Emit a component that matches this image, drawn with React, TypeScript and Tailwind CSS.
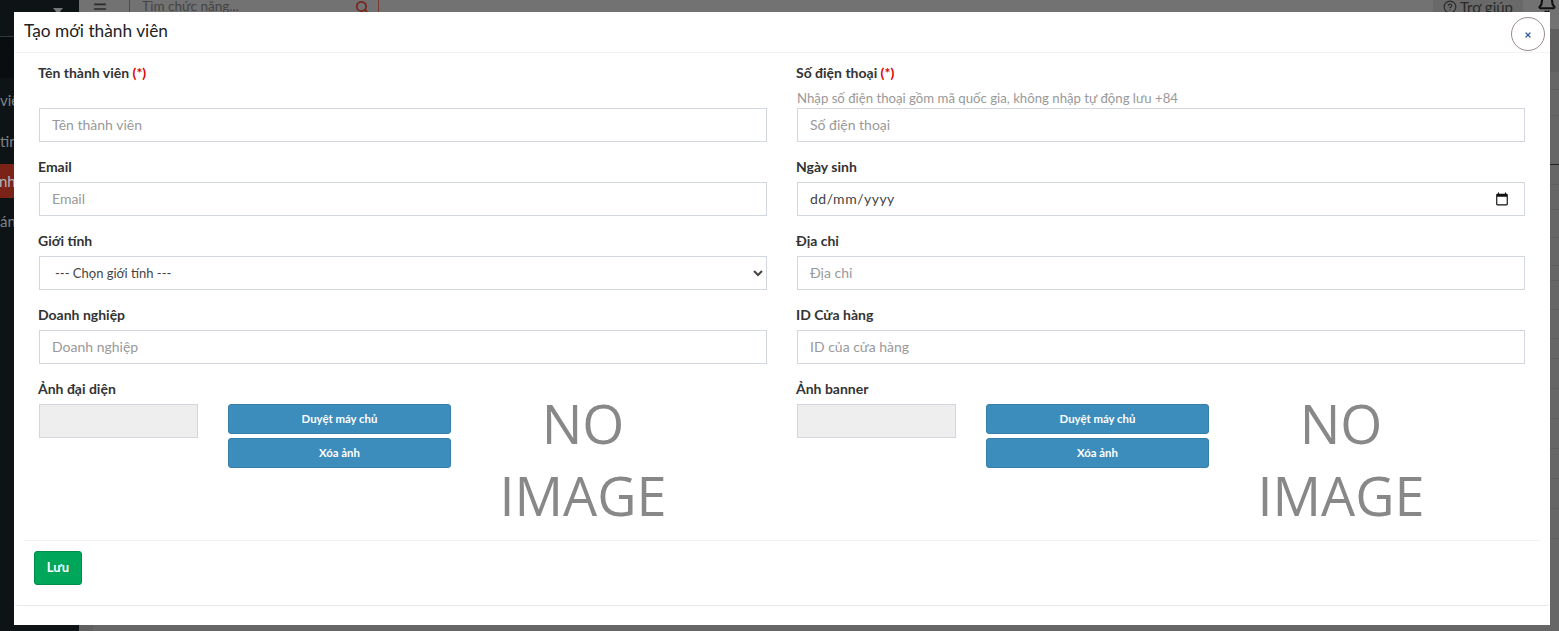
import React from "react";
import { Search, CircleHelp, Bell, X, Menu } from "lucide-react";

const F = "font-['Lato','Noto_Sans',sans-serif]";
const inputCls =
  "block w-full h-[34px] border border-[#d2d6de] bg-white px-3 pb-[2px] text-[14px] text-[#555] placeholder:text-[#999] outline-none rounded-none";

function Label({ text, req, hint }: { text: string; req?: boolean; hint?: string }) {
  return (
    <div className={`text-[14px] leading-[18px] font-bold text-[#333] -ml-px ${hint !== undefined ? "mb-[1px]" : "mb-[6px]"}`}>
      {text}
      {req && <span className="text-[#dd0000]"> (*)</span>}
      {hint !== undefined && (
        <div className="mt-[7px] ml-px h-[18px] text-[13.2px] font-normal text-[#999]">{hint}</div>
      )}
    </div>
  );
}

function Field({ label, placeholder, req, hint }: { label: string; placeholder: string; req?: boolean; hint?: string }) {
  return (
    <div className="mb-[16px]">
      <Label text={label} req={req} hint={hint} />
      <input className={inputCls} placeholder={placeholder} readOnly />
    </div>
  );
}

function ImageField({ label }: { label: string }) {
  return (
    <div>
      <Label text={label} />
      <div className="flex">
        <div className="w-[159px] h-[34px] border border-[#d2d6de] bg-[#eeeeee] shrink-0" />
        <div className="w-[223px] ml-[30px] flex flex-col gap-1 shrink-0">
          <button className="h-[30px] rounded-[3px] border border-[#367fa9] bg-[#3c8dbc] text-white text-[11.4px] font-bold">Duyệt máy chủ</button>
          <button className="h-[30px] rounded-[3px] border border-[#367fa9] bg-[#3c8dbc] text-white text-[11.4px] font-bold">Xóa ảnh</button>
        </div>
        <div className="w-[264px] -mt-[17px] text-center text-[#888] text-[54px] leading-[72px] font-['Open_Sans',sans-serif]">
          NO<br />IMAGE
        </div>
      </div>
    </div>
  );
}

export default function App() {
  return (
    <div className={`relative h-[631px] w-[1559px] overflow-hidden flex bg-[#666] ${F}`}>
      <aside className="w-[79px] shrink-0 bg-[#0e1316] text-[#7d8285] text-[15px] overflow-hidden">
        <div className="h-[37px] border-b border-[#33383a] flex justify-end pr-[16px] pt-[8px]">
          <div className="w-0 h-0 border-l-[5px] border-r-[5px] border-t-[6px] border-l-transparent border-r-transparent border-t-[#777]" />
        </div>
        <div className="h-[41px] bg-[#0a0d0f]" />
        <div className="flex flex-col gap-[6px] mt-[6px]">
          <div className="h-[34px] pb-[2px] flex items-center">viên</div>
          <div className="h-[34px] flex items-center">tin</div>
          <div className="h-[34px] flex items-center bg-[#7c2318] text-[#b5b5b5] -ml-[1px]">nh</div>
          <div className="h-[34px] flex items-center">ánh</div>
        </div>
      </aside>
      <main className="flex-1 flex flex-col bg-[#666]">
        <div className="h-[30px] shrink-0 bg-[#727272] border-b border-[#5e5e5e] flex items-start text-[#2a2a2a]">
          <Menu className="ml-[13px] mt-[1px] w-4 h-4" strokeWidth={2.5} />
          <div className="ml-[21px] w-[250px] h-[20px] -mt-[3px] pb-[1px] border-x border-[#7c3a30] flex items-center justify-between pl-3 pr-[9px] text-[13.5px] text-[#444]">
            Tìm chức năng...
            <Search className="w-3.5 h-3.5 text-[#7c2318]" strokeWidth={3} />
          </div>
          <div className="ml-auto mr-[2px] flex">
            <div className="h-[14px] px-[10px] bg-[#696969] flex items-center gap-[3px] text-[15px] leading-none whitespace-nowrap">
              <CircleHelp className="w-[14px] h-[14px]" /> Trợ giúp
            </div>
            <Bell className="ml-[14px] w-[20px] h-[20px] -mt-[6px] text-[#111]" strokeWidth={2.5} />
          </div>
        </div>
        <div className="flex-1 border-l-[14px] border-[#606060] flex flex-col">
          <div className="h-[42px] bg-[#5f5f5f]" />
          <div className="h-[18px] border-b border-[#5e5e5e]" />
          <div className="h-[26px] border-b border-[#5e5e5e]" />
          <div className="h-[49px] border-b border-[#222]" />
          <div className="h-[20px] border-b border-[#5e5e5e]" />
          <div className="h-[25px] border-b border-[#5e5e5e]" />
          <div className="h-[28px] border-b border-[#5e5e5e]" />
          <div className="h-[28px] border-b border-[#5e5e5e]" />
          <div className="h-[15px] border-b border-[#5e5e5e]" />
          <div className="h-[29px] border-b border-[#5e5e5e]" />
          <div className="h-[29px] border-b border-[#5e5e5e]" />
          <div className="h-[20px] border-b border-[#5e5e5e]" />
          <div className="h-[30px] border-b border-[#5e5e5e]" />
          <div className="h-[30px] border-b border-[#5e5e5e]" />
          <div className="h-[30px] border-b border-[#5e5e5e]" />
          <div className="h-[30px] border-b border-[#5e5e5e]" />
          <div className="h-[30px] border-b border-[#5e5e5e]" />
          <div className="h-[30px] border-b border-[#5e5e5e]" />
        </div>
      </main>

      <div className="absolute left-[14px] top-[12px] w-[1536px] h-[613px] bg-white flex flex-col">
        <div className="h-[41px] shrink-0 border-b border-[#f2f2f2] pl-[10px] pt-[7px] text-[17.3px] leading-[24px] text-[#222]">Tạo mới thành viên</div>
        <button className="absolute right-[5px] top-[5px] w-[34px] h-[34px] rounded-full border border-[#9b8b8b] bg-white flex items-center justify-center text-[#3b5ea8]">
          <X className="w-[8px] h-[8px] mt-[2px]" strokeWidth={4} />
        </button>
        <div className="flex-1 min-h-0 mx-[10px] border-b border-[#f2f2f2] px-[15px] pt-[11px] grid grid-cols-2 gap-x-[30px]">
          <div>
            <Field label="Tên thành viên" req hint="" placeholder="Tên thành viên" />
            <Field label="Email" placeholder="Email" />
            <div className="mb-[16px]">
              <Label text="Giới tính" />
              <select className="block w-full h-[34px] border border-[#d2d6de] bg-white pl-[11px] pr-3 pb-[1px] text-[13px] text-[#444] outline-none rounded-none" defaultValue="">
                <option value="">--- Chọn giới tính ---</option>
              </select>
            </div>
            <Field label="Doanh nghiệp" placeholder="Doanh nghiệp" />
            <ImageField label="Ảnh đại diện" />
          </div>
          <div>
            <Field label="Số điện thoại" req hint="Nhập số điện thoại gồm mã quốc gia, không nhập tự động lưu +84" placeholder="Số điện thoại" />
            <div className="mb-[16px]">
              <Label text="Ngày sinh" />
              <div className="flex items-center justify-between h-[34px] border border-[#d2d6de] bg-white pl-3 pr-[15px] pb-[1px] text-[14px] tracking-[0.5px] text-[#444]">
                dd/mm/yyyy
                <svg viewBox="0 0 24 24" className="w-[14px] h-[14px] fill-[#111]">
                  <path d="M20 3h-1V1h-2v2H7V1H5v2H4c-1.1 0-2 .9-2 2v16c0 1.1.9 2 2 2h16c1.1 0 2-.9 2-2V5c0-1.1-.9-2-2-2zm0 18H4V8h16v13z" />
                </svg>
              </div>
            </div>
            <Field label="Địa chỉ" placeholder="Địa chỉ" />
            <Field label="ID Cửa hàng" placeholder="ID của cửa hàng" />
            <ImageField label="Ảnh banner" />
          </div>
        </div>
        <div className="h-[65px] shrink-0 pl-[20px] pt-[10px] border-b border-[#e8e8e8] rounded-b-[4px]">
          <button className="w-[48px] h-[34px] rounded-[3px] border border-[#008d4c] bg-[#00a65a] text-white text-[13px] font-bold">Lưu</button>
        </div>
        <div className="h-[19px] shrink-0" />
      </div>
    </div>
  );
}
